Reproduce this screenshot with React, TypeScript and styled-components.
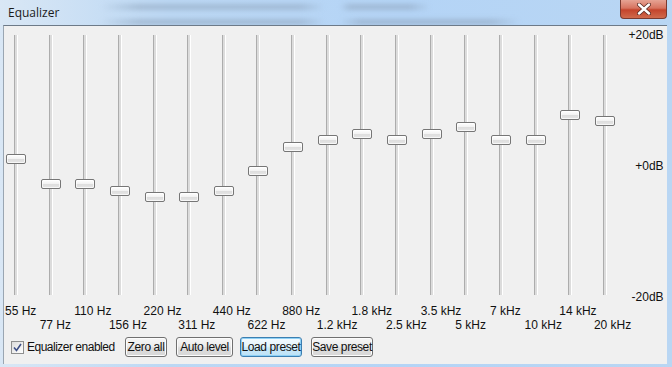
import styled, { createGlobalStyle } from "styled-components";

const GlobalStyle = createGlobalStyle`
  body {
    margin: 0;
    background: #b9d6f2;
    font-family: "Liberation Sans", Arial, sans-serif;
  }
`;

const Window = styled.div`
  width: 672px;
  height: 367px;
  display: flex;
  flex-direction: column;
  overflow: hidden;
  background: linear-gradient(90deg, #d9e7f5 0%, #bcd8f4 25%, #b4d4f6 60%, #b9d6f3 100%);
`;

const TitleBar = styled.div`
  height: 25px;
  display: flex;
  align-items: flex-start;
  position: relative;
`;

const Title = styled.span`
  font-family: "Open Sans", "DejaVu Sans", sans-serif;
  font-size: 12px;
  color: #1b1b1b;
  padding: 4px 0 0 8px;
`;

const Blur = styled.div`
  position: absolute;
  top: 4px;
  left: 100px;
  width: 500px;
  height: 24px;
  background:
    linear-gradient(90deg, transparent 0, #8ea3bb 8%, #8ea3bb 40%, transparent 45%, transparent 48%, #8ea3bb 50%, #8ea3bb 62%, transparent 66%) 0 0 / 100% 6px no-repeat,
    linear-gradient(90deg, transparent 0, #8ea3bb 8%, #8ea3bb 40%, transparent 45%, transparent 48%, #8ea3bb 52%, #8ea3bb 78%, transparent 84%) 0 15px / 100% 6px no-repeat;
  filter: blur(2.5px);
  opacity: 0.55;
`;

const CloseButton = styled.div`
  margin-left: auto;
  margin-right: 5px;
  width: 47px;
  height: 19px;
  box-sizing: border-box;
  border: 1px solid #7a3a30;
  border-top: none;
  border-radius: 0 0 4px 4px;
  background: linear-gradient(#e6a394 0%, #d7735f 45%, #c4442c 55%, #d06a4c 100%);
  display: flex;
  align-items: center;
  justify-content: center;
  position: relative;
  z-index: 1;
`;

const Panel = styled.div`
  flex: 1;
  margin: 0 5px 3px 3px;
  background: #f0f0f0;
  border-top: 1px solid #6d7a88;
  border-left: 1px solid #9aa6b2;
  display: flex;
  flex-direction: column;
  padding-top: 9px;
  position: relative;
  z-index: 1;
`;

const EqArea = styled.div`
  display: flex;
  padding-left: 1px;
`;

const Column = styled.div`
  width: 34.65px;
  flex-shrink: 0;
  display: flex;
  flex-direction: column;
`;

const SliderArea = styled.div`
  height: 262px;
  position: relative;
`;

const Track = styled.div`
  position: absolute;
  left: 9px;
  top: 0;
  width: 2px;
  height: 260px;
  background: #dcdcdc;
  border-left: 1px solid #acacac;
  border-right: 1px solid #ffffff;
`;

const Thumb = styled.div`
  position: absolute;
  left: 1px;
  width: 20px;
  height: 10px;
  box-sizing: border-box;
  border: 1px solid #767676;
  border-radius: 2px;
  background: linear-gradient(#ffffff 0%, #f3f3f3 45%, #dedede 55%, #e6e6e6 100%);
  box-shadow: inset 0 0 0 1px rgba(255, 255, 255, 0.7);
`;

const FreqLabel = styled.div<{ $low: boolean }>`
  margin-top: ${(p) => (p.$low ? 21 : 7)}px;
  font-size: 12px;
  line-height: 14px;
  white-space: nowrap;
  color: #111;
`;

const Scale = styled.div`
  flex: 1;
  height: 276px;
  margin-top: -7px;
  display: flex;
  flex-direction: column;
  justify-content: space-between;
  align-items: flex-end;
  padding-right: 4px;
  font-size: 12px;
  line-height: 14px;
  color: #111;
`;

const Footer = styled.div`
  display: flex;
  align-items: center;
  margin-top: 5px;
  padding-left: 7px;
  height: 20px;
`;

const CheckLabel = styled.label`
  display: flex;
  align-items: center;
  gap: 3px;
  font-size: 12px;
  letter-spacing: -0.5px;
  color: #111;
  width: 114px;
  white-space: nowrap;
`;

const CheckBox = styled.span`
  width: 13px;
  height: 13px;
  flex-shrink: 0;
  box-sizing: border-box;
  border: 1px solid #8e8f8f;
  background: linear-gradient(135deg, #dcdcdc, #ffffff);
  display: flex;
  align-items: center;
  justify-content: center;
`;

const Button = styled.button<{ $focused?: boolean; $w: number; $gap: number }>`
  width: ${(p) => p.$w}px;
  height: 20px;
  box-sizing: border-box;
  padding: 0;
  margin-right: ${(p) => p.$gap}px;
  font-family: "Liberation Sans", Arial, sans-serif;
  font-size: 12px;
  letter-spacing: -0.4px;
  color: #111;
  white-space: nowrap;
  border-radius: 3px;
  border: 1px solid ${(p) => (p.$focused ? "#3c7fb1" : "#707070")};
  background: ${(p) =>
    p.$focused
      ? "linear-gradient(#f3fafe 0%, #e5f4fc 45%, #c9e8f9 55%, #bde2f6 100%)"
      : "linear-gradient(#f6f6f6 0%, #ececec 45%, #dddddd 55%, #d7d7d7 100%)"};
  box-shadow: inset 0 0 0 1px ${(p) => (p.$focused ? "#8ed0f5" : "#fcfcfc")};
`;

const bands = [
  { label: "55 Hz", top: 154 },
  { label: "77 Hz", top: 179 },
  { label: "110 Hz", top: 179 },
  { label: "156 Hz", top: 186 },
  { label: "220 Hz", top: 192 },
  { label: "311 Hz", top: 192 },
  { label: "440 Hz", top: 186 },
  { label: "622 Hz", top: 166 },
  { label: "880 Hz", top: 142 },
  { label: "1.2 kHz", top: 135 },
  { label: "1.8 kHz", top: 129 },
  { label: "2.5 kHz", top: 135 },
  { label: "3.5 kHz", top: 129 },
  { label: "5 kHz", top: 122 },
  { label: "7 kHz", top: 135 },
  { label: "10 kHz", top: 135 },
  { label: "14 kHz", top: 110 },
  { label: "20 kHz", top: 116 },
];

export default function App() {
  return (
    <>
      <GlobalStyle />
      <Window>
        <TitleBar>
          <Title>Equalizer</Title>
          <Blur />
          <CloseButton>
            <svg width="14" height="12" viewBox="0 0 14 12">
              <path
                d="M2 1.5 L12 10.5 M12 1.5 L2 10.5"
                stroke="#5a2a22"
                strokeWidth="4"
                strokeLinecap="round"
              />
              <path
                d="M2 1.5 L12 10.5 M12 1.5 L2 10.5"
                stroke="#ffffff"
                strokeWidth="2.4"
                strokeLinecap="round"
              />
            </svg>
          </CloseButton>
        </TitleBar>
        <Panel>
          <EqArea>
            {bands.map((b, i) => (
              <Column key={b.label}>
                <SliderArea>
                  <Track />
                  <Thumb style={{ top: b.top - 35 }} />
                </SliderArea>
                <FreqLabel $low={i % 2 === 1}>{b.label}</FreqLabel>
              </Column>
            ))}
            <Scale>
              <span>+20dB</span>
              <span>+0dB</span>
              <span>-20dB</span>
            </Scale>
          </EqArea>
          <Footer>
            <CheckLabel>
              <CheckBox>
                <svg width="9" height="9" viewBox="0 0 9 9">
                  <path d="M1 4.5 L3.5 7.5 L8 1" stroke="#3d4f86" strokeWidth="1.6" fill="none" />
                </svg>
              </CheckBox>
              Equalizer enabled
            </CheckLabel>
            <Button $w={42} $gap={9}>Zero all</Button>
            <Button $w={57} $gap={7}>Auto level</Button>
            <Button $w={62} $gap={9} $focused>
              Load preset
            </Button>
            <Button $w={62} $gap={0}>Save preset</Button>
          </Footer>
        </Panel>
      </Window>
    </>
  );
}
